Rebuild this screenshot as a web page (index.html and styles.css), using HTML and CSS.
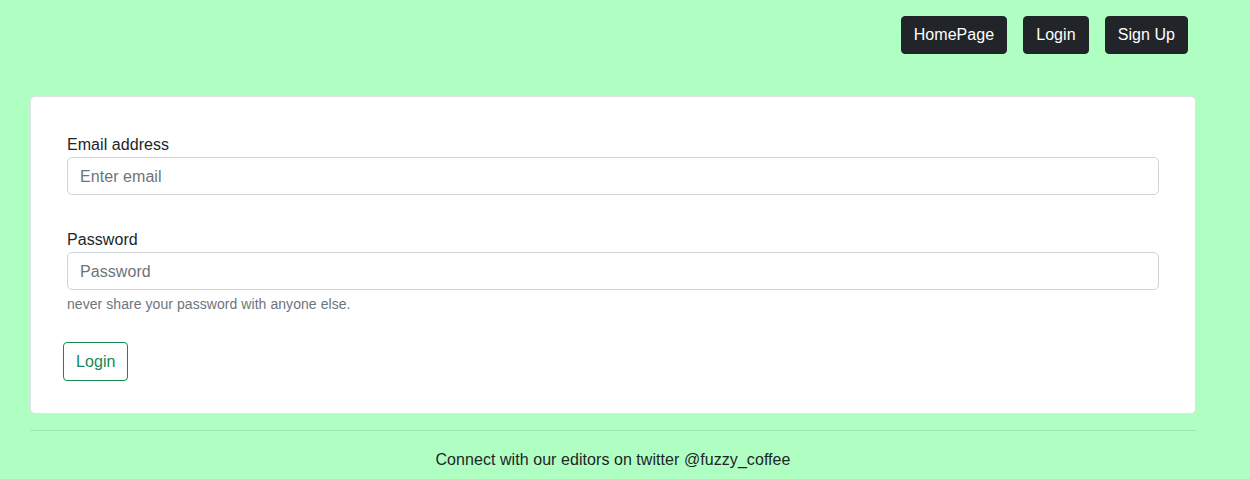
FILE: index.html
```html
<!DOCTYPE html>
<html lang="en">
<head>
<meta charset="utf-8">
<title>Login</title>
<link rel="stylesheet" href="styles.css">
</head>
<body>
<nav class="topnav">
  <a class="btn-dark" href="#">HomePage</a>
  <a class="btn-dark" href="#">Login</a>
  <a class="btn-dark" href="#">Sign Up</a>
</nav>
<main class="wrap">
  <form class="card">
    <div class="group">
      <label class="label" for="email">Email address</label>
      <input class="input" id="email" type="email" placeholder="Enter email">
    </div>
    <div class="group group-pw">
      <label class="label" for="pw">Password</label>
      <input class="input" id="pw" type="password" placeholder="Password">
      <div class="help">never share your password with anyone else.</div>
    </div>
    <button class="btn-outline" type="button">Login</button>
  </form>
  <hr class="rule">
  <footer class="foot">Connect with our editors on twitter @fuzzy_coffee</footer>
</main>
</body>
</html>
```

FILE: styles.css
```css
* { box-sizing: border-box; }
html, body { margin: 0; padding: 0; }
body {
  background: #b0ffc2;
  font-family: "Liberation Sans", Arial, sans-serif;
  font-size: 16px;
  line-height: 24px;
  color: #212529;
  letter-spacing: 0.06px;
}
.topnav {
  display: flex;
  justify-content: flex-end;
  gap: 16px;
  padding: 16px 62px 0 0;
}
.btn-dark {
  display: inline-block;
  background: #212529;
  color: #fff;
  text-decoration: none;
  border: 1px solid #212529;
  border-radius: 4px;
  padding: 6px 12px;
  font-size: 16px;
  line-height: 24px;
}
.wrap {
  margin: 42px 0 0 30px;
  width: 1166px;
}
.card {
  background: #fff;
  border: 1px solid #dee2e6;
  border-radius: 5px;
  padding: 36px 36px 32px 36px;
}
.label {
  display: block;
  line-height: 24px;
}
.input {
  display: block;
  width: 100%;
  height: 38px;
  padding: 7px 12px 5px;
  font-family: inherit;
  font-size: 16px;
  letter-spacing: 0.06px;
  color: #212529;
  border: 1px solid #ced4da;
  border-radius: 5px;
  background: #fff;
}
.input::placeholder { color: #6c757d; }
.group-pw { margin-top: 33px; }
.help {
  margin-top: 4px;
  font-size: 14px;
  line-height: 21px;
  color: #6c757d;
}
.btn-outline {
  display: block;
  margin: 27px 0 0 -4px;
  height: 39px;
  padding: 6px 12px;
  font-family: inherit;
  font-size: 16px;
  letter-spacing: 0.06px;
  line-height: 24px;
  color: #198754;
  background: #fff;
  border: 1px solid #198754;
  border-radius: 4px;
}
.rule {
  margin: 16px 0 0 0;
  border: 0;
  border-top: 1px solid rgba(0,0,0,0.1);
}
.foot {
  text-align: center;
  margin-top: 17px;
  line-height: 24px;
}
```
